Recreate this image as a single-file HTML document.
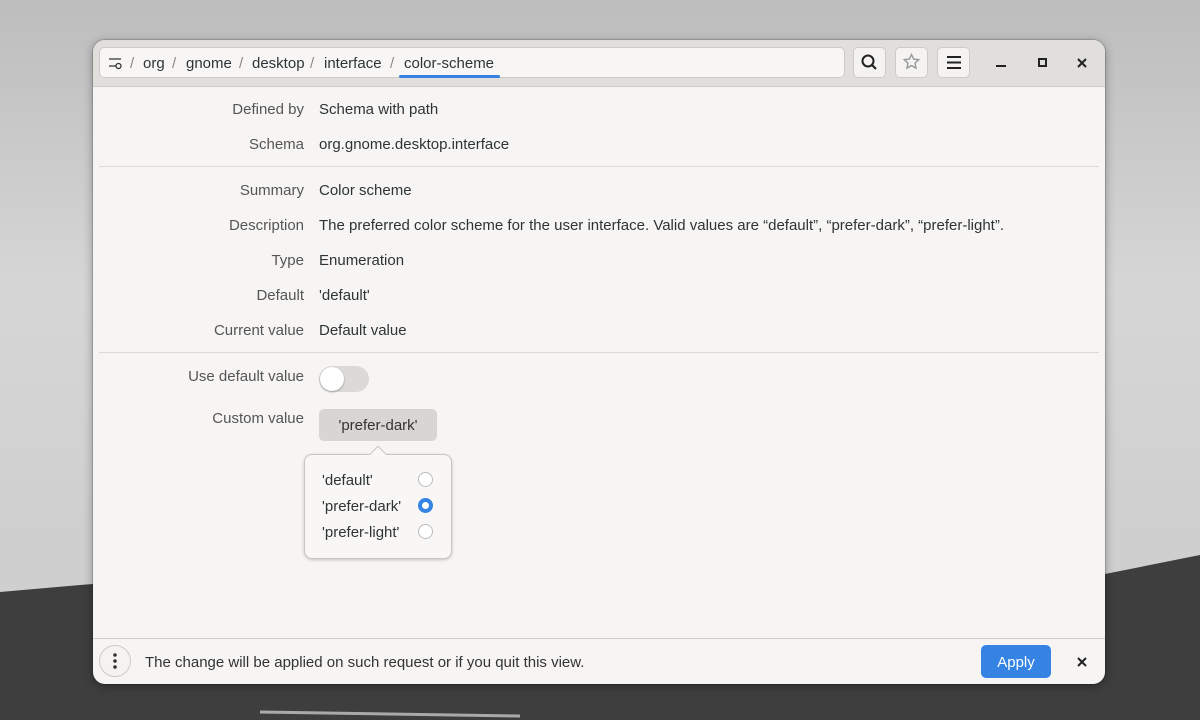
<!DOCTYPE html>
<html><head><style>
body{margin:0;width:1200px;height:720px;overflow:hidden;font-family:"Liberation Sans",sans-serif;font-size:15px;color:#2e3436;position:relative;background:linear-gradient(#bdbdbd,#d6d6d6 40%,#cfcfcf 75%)}
.bg{position:absolute;left:0;top:0}
.win{position:absolute;left:93px;top:40px;width:1012px;height:644px;background:#f6f5f4;border-radius:12px;box-shadow:0 2px 10px rgba(0,0,0,.35),0 0 0 1px rgba(0,0,0,.15);overflow:hidden}
.hdr{position:absolute;left:0;top:0;right:0;height:46px;background:#e1dfdc;border-bottom:1px solid #cfcdca}
.path{position:absolute;left:6px;top:7px;width:746px;height:31px;background:#f7f6f5;border:1px solid #cdcbc8;border-radius:5px;box-sizing:border-box}
.path span{position:absolute;top:7px}
.btn{position:absolute;top:7px;width:33px;height:31px;background:#f4f3f2;border:1px solid #cdcbc8;border-radius:5px;box-sizing:border-box}
.lbl{position:absolute;right:801px;color:#555}
.val{position:absolute;left:226px}
.sep{position:absolute;left:6px;right:6px;height:1px;background:#dcdad7}
</style></head><body>
<svg class="bg" width="1200" height="720"><path d="M0 592 L80 585 Q130 580 170 588 L240 600 L1100 575 L1200 555 L1200 720 L0 720Z" fill="#3e3e3e"/><path d="M260 712 L520 716" stroke="#aaa" stroke-width="3"/></svg>
<div class="win">
<div class="hdr">
<div class="path">
<svg style="position:absolute;left:8px;top:8px" width="14" height="14" fill="none" stroke="#333" stroke-width="1.3"><path d="M1 3h12M1 10h7"/><circle cx="10.5" cy="10" r="2.5"/></svg>
<span style="left:30px;color:#888">/</span><span style="left:43px">org</span>
<span style="left:72px;color:#888">/</span><span style="left:86px">gnome</span>
<span style="left:139px;color:#888">/</span><span style="left:152px">desktop</span>
<span style="left:210px;color:#888">/</span><span style="left:224px">interface</span>
<span style="left:290px;color:#888">/</span><span style="left:304px">color-scheme</span>
<div style="position:absolute;left:299px;width:101px;bottom:-1px;height:3px;background:#3584e4;border-radius:2px"></div>
</div>
<div class="btn" style="left:760px"><svg width="31" height="29"><circle cx="14" cy="13" r="5.5" fill="none" stroke="#222" stroke-width="2"/><path d="M18 17l4 4" stroke="#222" stroke-width="2.2"/></svg></div>
<div class="btn" style="left:802px"><svg width="31" height="29"><path d="M15.5 6.5l2.2 4.6 5 .6-3.7 3.4 1 5-4.5-2.5-4.5 2.5 1-5-3.7-3.4 5-.6z" fill="none" stroke="#999" stroke-width="1.4"/></svg></div>
<div class="btn" style="left:844px"><svg width="31" height="29"><path d="M9 9h14M9 14.5h14M9 20h14" stroke="#222" stroke-width="2"/></svg></div>
<svg style="position:absolute;left:900px;top:14px" width="100" height="18"><path d="M3 12h10" stroke="#222" stroke-width="2"/><rect x="46" y="5" width="7" height="7" fill="none" stroke="#222" stroke-width="2"/><path d="M85 5l8 8M93 5l-8 8" stroke="#222" stroke-width="2"/></svg>
</div>
<span class="lbl" style="top:61px">Defined by</span><span class="val" style="top:61px">Schema with path</span>
<span class="lbl" style="top:96px">Schema</span><span class="val" style="top:96px">org.gnome.desktop.interface</span>
<div class="sep" style="top:126px"></div>
<span class="lbl" style="top:142px">Summary</span><span class="val" style="top:142px">Color scheme</span>
<span class="lbl" style="top:177px">Description</span><span class="val" style="top:177px">The preferred color scheme for the user interface. Valid values are “default”, “prefer-dark”, “prefer-light”.</span>
<span class="lbl" style="top:212px">Type</span><span class="val" style="top:212px">Enumeration</span>
<span class="lbl" style="top:247px">Default</span><span class="val" style="top:247px">'default'</span>
<span class="lbl" style="top:282px">Current value</span><span class="val" style="top:282px">Default value</span>
<div class="sep" style="top:312px"></div>
<span class="lbl" style="top:328px">Use default value</span>
<div style="position:absolute;left:226px;top:326px;width:50px;height:26px;border-radius:13px;background:#dcdad7"><div style="position:absolute;left:1px;top:1px;width:24px;height:24px;border-radius:12px;background:#fff;box-shadow:0 1px 2px rgba(0,0,0,.3)"></div></div>
<span class="lbl" style="top:370px">Custom value</span>
<div style="position:absolute;left:226px;top:369px;width:118px;height:32px;border-radius:5px;background:#d8d5d2;text-align:center;line-height:33px;color:#333">'prefer-dark'</div>
<div style="position:absolute;left:211px;top:414px;width:146px;height:103px;background:#f8f7f6;border:1px solid #c8c6c3;border-radius:8px;box-shadow:0 1px 3px rgba(0,0,0,.2)"></div>
<div style="position:absolute;left:279px;top:408px;width:11px;height:11px;background:#f8f7f6;border-left:1px solid #c8c6c3;border-top:1px solid #c8c6c3;transform:rotate(45deg)"></div>
<span style="position:absolute;left:229px;top:432px">'default'</span>
<span style="position:absolute;left:229px;top:458px">'prefer-dark'</span>
<span style="position:absolute;left:229px;top:484px">'prefer-light'</span>
<div style="position:absolute;left:325px;top:432px;width:13px;height:13px;border-radius:50%;border:1px solid #bbb;background:#fff"></div>
<div style="position:absolute;left:325px;top:458px;width:15px;height:15px;border-radius:50%;background:#3584e4"><div style="position:absolute;left:4px;top:4px;width:7px;height:7px;border-radius:50%;background:#fff"></div></div>
<div style="position:absolute;left:325px;top:484px;width:13px;height:13px;border-radius:50%;border:1px solid #bbb;background:#fff"></div>
<div style="position:absolute;left:0;right:0;top:598px;height:1px;background:#cfcdca"></div>
<div style="position:absolute;left:6px;top:605px;width:32px;height:32px;border-radius:50%;border:1px solid #cdcbc8;box-sizing:border-box;background:#f4f3f2"><svg width="30" height="30"><circle cx="15" cy="9" r="1.8" fill="#333"/><circle cx="15" cy="15" r="1.8" fill="#333"/><circle cx="15" cy="21" r="1.8" fill="#333"/></svg></div>
<span style="position:absolute;left:52px;top:614px;color:#333">The change will be applied on such request or if you quit this view.</span>
<div style="position:absolute;left:888px;top:605px;width:70px;height:33px;border-radius:5px;background:#3584e4;color:#fff;text-align:center;line-height:35px">Apply</div>
<svg style="position:absolute;left:982px;top:615px" width="14" height="14"><path d="M3 3l8 8M11 3l-8 8" stroke="#222" stroke-width="2"/></svg>
</div>
</body></html>
